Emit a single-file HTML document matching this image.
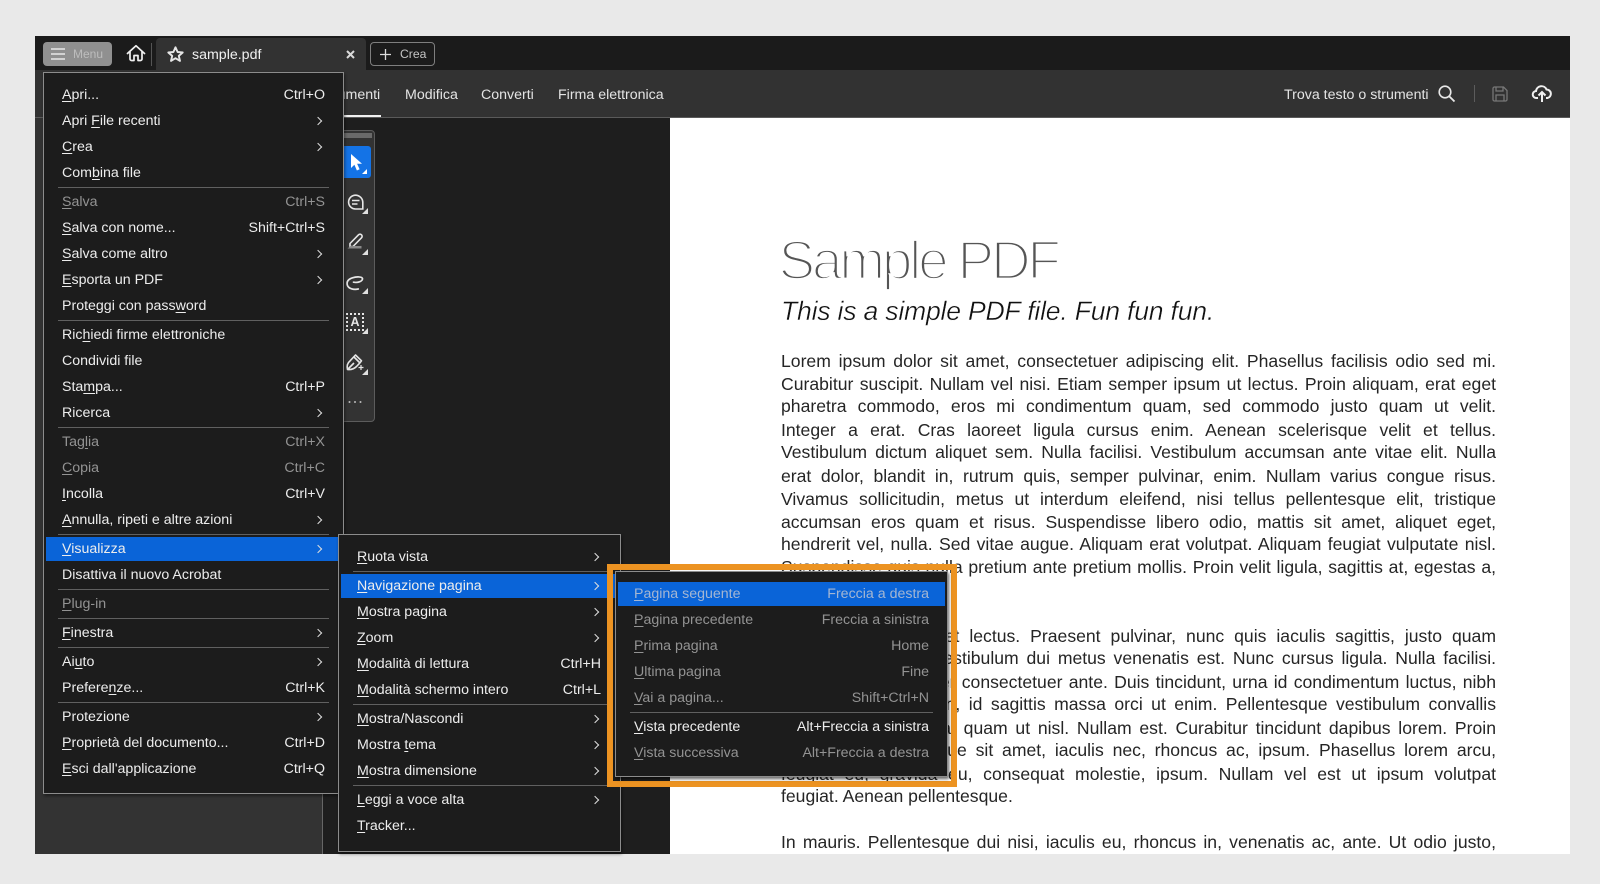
<!DOCTYPE html>
<html lang="it">
<head>
<meta charset="utf-8">
<title>sample.pdf</title>
<style>
html,body{margin:0;padding:0;width:1600px;height:884px;overflow:hidden;background:#e9e9e9;font-family:"Liberation Sans",Arial,sans-serif;}
div,span{box-sizing:border-box;}
.abs{position:absolute;}
#win{position:absolute;left:35px;top:36px;width:1535px;height:818px;background:#1e1e1e;overflow:hidden;}
#strip{position:absolute;left:35px;top:36px;width:1535px;height:34px;background:#1b1b1b;}
#bar{position:absolute;left:35px;top:70px;width:1535px;height:48px;background:#323232;border-bottom:1px solid #5a5a5a;}
#left{position:absolute;left:35px;top:118px;width:288px;height:736px;background:#333;border-right:1px solid #666;}
#doc{position:absolute;left:670px;top:118px;width:900px;height:736px;background:#fff;overflow:hidden;color:#222;}
.t{position:absolute;left:111px;width:715px;height:23px;line-height:23px;font-size:17.6px;text-align:justify;text-align-last:justify;overflow:hidden;color:#252525;}
.t.e{text-align-last:left;}
.nav{position:absolute;top:84px;height:22px;line-height:22px;font-size:14.2px;color:#e4e4e4;white-space:nowrap;}
.box{position:absolute;background:#1c1c1c;border:1px solid #8c8c8c;box-shadow:1px 2px 3px rgba(0,0,0,.45);}
.sep{position:absolute;height:1px;background:#606060;}
.hl{position:absolute;height:24px;background:#0a64d8;}
.r{position:absolute;height:26px;line-height:26px;font-size:14.2px;color:#ededed;display:flex;justify-content:space-between;white-space:nowrap;}
.m1{left:62px;width:263px;}
.m2{left:357px;width:244px;}
.m3{left:634px;width:295px;}
.d{color:#939393;}
.onblue{color:#a4b6d2;}
.c{position:relative;width:6px;height:6px;border-top:1.9px solid #dedede;border-right:1.9px solid #dedede;transform:rotate(45deg);margin:9.5px 4px 0 0;}
.m2 .c{margin-right:3px;}
u{text-decoration-thickness:1px;text-underline-offset:2px;}
svg{position:absolute;overflow:visible;}
.tri{position:absolute;width:0;height:0;border-left:6px solid transparent;border-bottom:6px solid #e0e0e0;}
</style>
</head>
<body>
<div id="win"></div>
<div id="strip"></div>
<div id="bar"></div>
<div id="left"></div>

<!-- menu button -->
<div class="abs" style="left:43px;top:42px;width:69px;height:24px;background:#909090;border-radius:4px;"></div>
<svg style="left:50px;top:47px" width="16" height="14"><path d="M1 2h14M1 7h14M1 12h14" stroke="#dcdcdc" stroke-width="1.7" fill="none"/></svg>
<div class="abs" style="left:73px;top:44px;line-height:20px;font-size:12px;color:#bdbdbd;">Menu</div>
<!-- home -->
<svg style="left:126px;top:44px" width="20" height="19"><path d="M1.5 9.5 10 1.8l8.5 7.7M4 7.500V15a1.500 1.500 0 0 0 1.500 1.500H8V11.500h4V16.500h2.500A1.500 1.500 0 0 0 16 15V7.500" stroke="#efefef" stroke-width="1.7" fill="none" stroke-linejoin="round" stroke-linecap="round"/></svg>
<div class="abs" style="left:151px;top:43px;width:1px;height:23px;background:#555;"></div>
<!-- tab -->
<div class="abs" style="left:156px;top:38px;width:210px;height:32px;background:#323232;border-radius:4px 4px 0 0;"></div>
<svg style="left:167px;top:46px" width="17" height="16"><path d="M8.500 1.300 10.600 6l5.100.5-3.900 3.400 1.200 5-4.500-2.700L4 14.900l1.200-5L1.300 6.500 6.400 6z" stroke="#e6e6e6" stroke-width="1.900" fill="none" stroke-linejoin="round"/></svg>
<div class="abs" style="left:192px;top:44px;line-height:22px;font-size:14.2px;color:#f0f0f0;">sample.pdf</div>
<svg style="left:346px;top:49.500px" width="9" height="9"><path d="M1 1l7 7M8 1 1 8" stroke="#dadada" stroke-width="2" fill="none"/></svg>
<!-- crea -->
<div class="abs" style="left:370px;top:42px;width:65px;height:24px;border:1px solid #7e7e7e;border-radius:4px;"></div>
<svg style="left:380px;top:49px" width="11" height="11"><path d="M5.500 0v11M0 5.500h11" stroke="#dcdcdc" stroke-width="1.300" fill="none"/></svg>
<div class="abs" style="left:400px;top:44px;line-height:20px;font-size:12.200px;color:#c4c4c4;">Crea</div>

<!-- nav -->
<div class="nav" style="left:319.500px;">Strumenti</div>
<div class="abs" style="left:300px;top:115px;width:81px;height:2px;background:#f2f2f2;"></div>
<div class="nav" style="left:405px;">Modifica</div>
<div class="nav" style="left:481px;">Converti</div>
<div class="nav" style="left:558px;">Firma elettronica</div>
<div class="nav" style="left:1284px;">Trova testo o strumenti</div>
<svg style="left:1438px;top:85px" width="18" height="18"><circle cx="7" cy="7" r="5.800" stroke="#e8e8e8" stroke-width="1.600" fill="none"/><path d="M11.200 11.200 16.500 16.500" stroke="#e8e8e8" stroke-width="1.800" fill="none"/></svg>
<div class="abs" style="left:1474px;top:85px;width:1px;height:17px;background:#5c5c5c;"></div>
<svg style="left:1492px;top:86px" width="16" height="16"><path d="M1 2.500A1.500 1.500 0 0 1 2.500 1h9L15 4.500v9a1.500 1.500 0 0 1-1.500 1.500h-11A1.500 1.500 0 0 1 1 13.500zM4 1v4h7V1M4 15V9h8v6" stroke="#777" stroke-width="1.300" fill="none"/></svg>
<svg style="left:1532px;top:84px" width="20" height="19"><path d="M6 14H4.500A3.500 3.500 0 0 1 4 7a5.500 5.500 0 0 1 10.500-1.500A4.300 4.300 0 0 1 15.500 14H14" stroke="#f0f0f0" stroke-width="2" fill="none"/><path d="M10 18V8M6.500 11.500 10 8l3.500 3.500" stroke="#f0f0f0" stroke-width="2" fill="none"/></svg>

<!-- document -->
<div id="doc">
<div class="abs" style="left:108.500px;top:107px;line-height:70px;font-size:55px;letter-spacing:-3.250px;color:#555;-webkit-text-stroke:2.700px #fff;paint-order:fill stroke;white-space:nowrap;">Sample PDF</div>
<div class="abs" style="left:111px;top:174px;line-height:38px;font-size:26.600px;letter-spacing:-0.215px;font-style:italic;color:#111;-webkit-text-stroke:0.400px #fff;paint-order:fill stroke;white-space:nowrap;">This is a simple PDF file. Fun fun fun.</div>

<div class="t" style="top:231.500px">Lorem ipsum dolor sit amet, consectetuer adipiscing elit. Phasellus facilisis odio sed mi.</div>
<div class="t" style="top:254.500px">Curabitur suscipit. Nullam vel nisi. Etiam semper ipsum ut lectus. Proin aliquam, erat eget</div>
<div class="t" style="top:277.400px">pharetra commodo, eros mi condimentum quam, sed commodo justo quam ut velit.</div>
<div class="t" style="top:300.700px">Integer a erat. Cras laoreet ligula cursus enim. Aenean scelerisque velit et tellus.</div>
<div class="t" style="top:323.300px">Vestibulum dictum aliquet sem. Nulla facilisi. Vestibulum accumsan ante vitae elit. Nulla</div>
<div class="t" style="top:346.700px">erat dolor, blandit in, rutrum quis, semper pulvinar, enim. Nullam varius congue risus.</div>
<div class="t" style="top:369.700px">Vivamus sollicitudin, metus ut interdum eleifend, nisi tellus pellentesque elit, tristique</div>
<div class="t" style="top:392.700px">accumsan eros quam et risus. Suspendisse libero odio, mattis sit amet, aliquet eget,</div>
<div class="t" style="top:414.700px">hendrerit vel, nulla. Sed vitae augue. Aliquam erat volutpat. Aliquam feugiat vulputate nisl.</div>
<div class="t" style="top:437.600px">Suspendisse quis nulla pretium ante pretium mollis. Proin velit ligula, sagittis at, egestas a,</div>
<div class="t e" style="top:460.500px">pulvinar quis, nisl.</div>

<div class="t" style="top:506.500px">Pellentesque sit amet lectus. Praesent pulvinar, nunc quis iaculis sagittis, justo quam</div>
<div class="t" style="top:529.300px">lobortis tortor, sed vestibulum dui metus venenatis est. Nunc cursus ligula. Nulla facilisi.</div>
<div class="t" style="top:552.600px">Phasellus ullamcorper consectetuer ante. Duis tincidunt, urna id condimentum luctus, nibh</div>
<div class="t" style="top:575.300px">ante vulputate sapien, id sagittis massa orci ut enim. Pellentesque vestibulum convallis</div>
<div class="t" style="top:598.600px">sem. Nulla consequat quam ut nisl. Nullam est. Curabitur tincidunt dapibus lorem. Proin</div>
<div class="t" style="top:621.300px">velit turpis, scelerisque sit amet, iaculis nec, rhoncus ac, ipsum. Phasellus lorem arcu,</div>
<div class="t" style="top:644.600px">feugiat eu, gravida eu, consequat molestie, ipsum. Nullam vel est ut ipsum volutpat</div>
<div class="t e" style="top:667px">feugiat. Aenean pellentesque.</div>

<div class="t" style="top:712.500px">In mauris. Pellentesque dui nisi, iaculis eu, rhoncus in, venenatis ac, ante. Ut odio justo,</div>
</div>

<!-- tool palette -->
<div class="abs" style="left:323px;top:130px;width:52px;height:292px;background:#333;border:1px solid #5c5c5c;border-radius:4px;"></div>
<div class="abs" style="left:326px;top:133px;width:46px;height:5px;background:#6a6a6a;"></div>
<div class="abs" style="left:326px;top:146px;width:45px;height:32px;background:#1473e6;border-radius:3px;"></div>
<svg style="left:351px;top:154px" width="11" height="17"><path d="M0 0v14l3.400-3.200 2.500 5.700 2.700-1.200-2.500-5.500H11z" fill="#fff"/></svg>
<div class="tri" style="left:362px;top:169px;border-left-width:5px;border-bottom-width:5px;border-bottom-color:#fff;"></div>
<svg style="left:347px;top:194px" width="18" height="17"><path d="M8.500 1.200a7.300 7.300 0 0 1 7.300 7.300v6.500H8.500a6.900 6.900 0 0 1 0-13.800z" stroke="#e6e6e6" stroke-width="1.600" fill="none"/><path d="M5 6.500h7.500M5 10h5.500" stroke="#e6e6e6" stroke-width="1.500"/></svg>
<div class="tri" style="left:362px;top:208px;"></div>
<svg style="left:347px;top:233px" width="18" height="16"><path d="M3 10.500 11.500 1.800a2.100 2.100 0 0 1 3 3L6 13.500H3z" stroke="#e6e6e6" stroke-width="1.600" fill="none" stroke-linejoin="round"/><path d="M.5 15.500l3-2.500h11v2.500z" fill="#8a8a8a"/></svg>
<div class="tri" style="left:362px;top:249px;"></div>
<svg style="left:346px;top:276px" width="18" height="15"><path d="M16.500 2.500C16 .5 10.500.5 6.500 1.800 2 3.300.5 6 1.300 9c1 3.800 6.500 5 11 4M16.500 2.500c.3 2.800-4.500 4.500-9 3.700" stroke="#e6e6e6" stroke-width="1.700" fill="none" stroke-linecap="round"/></svg>
<div class="tri" style="left:362px;top:288px;"></div>
<div class="abs" style="left:346px;top:313px;width:18px;height:18px;border:2px dotted #e6e6e6;"></div>
<div class="abs" style="left:346px;top:313px;width:18px;height:18px;line-height:18px;text-align:center;font-size:12.500px;font-weight:bold;color:#e6e6e6;">A</div>
<div class="tri" style="left:362px;top:328px;"></div>
<svg style="left:346px;top:354px" width="19" height="17"><path d="M1.500 15.500c-1-4 .2-6.800 2.700-8.800L9.500 1l6 5.800-1.500 2-3.500 3.700c-2.500 2.500-5.500 3.400-9 3zM1.500 15.500l6.500-6.500M8 3l5.500 5.500" stroke="#e6e6e6" stroke-width="1.600" fill="none" stroke-linejoin="round"/><path d="M12.500 13.500h5M15 11v5" stroke="#e6e6e6" stroke-width="1.200"/></svg>
<div class="tri" style="left:362px;top:369px;"></div>
<svg style="left:348px;top:400px" width="16" height="4"><circle cx="1.500" cy="2" r="1" fill="#bbb"/><circle cx="7" cy="2" r="1" fill="#bbb"/><circle cx="12.500" cy="2" r="1" fill="#bbb"/></svg>

<!-- main menu -->
<div class="box" style="left:43px;top:72px;width:301px;height:722px;"></div>
<div class="r m1" style="top:82px"><span><u>A</u>pri...</span><span>Ctrl+O</span></div>
<div class="r m1" style="top:108px"><span>Apri <u>F</u>ile recenti</span><span class="c"></span></div>
<div class="r m1" style="top:134px"><span><u>C</u>rea</span><span class="c"></span></div>
<div class="r m1" style="top:160px"><span>Com<u>b</u>ina file</span></div>
<div class="sep" style="left:58px;top:187px;width:271px;"></div>
<div class="r m1 d" style="top:189px"><span><u>S</u>alva</span><span>Ctrl+S</span></div>
<div class="r m1" style="top:215px"><span><u>S</u>alva con nome...</span><span>Shift+Ctrl+S</span></div>
<div class="r m1" style="top:241px"><span><u>S</u>alva come altro</span><span class="c"></span></div>
<div class="r m1" style="top:267px"><span><u>E</u>sporta un PDF</span><span class="c"></span></div>
<div class="r m1" style="top:293px"><span>Proteggi con pass<u>w</u>ord</span></div>
<div class="sep" style="left:58px;top:320px;width:271px;"></div>
<div class="r m1" style="top:322px"><span>Ric<u>h</u>iedi firme elettroniche</span></div>
<div class="r m1" style="top:348px"><span>Condividi file</span></div>
<div class="r m1" style="top:374px"><span>Sta<u>m</u>pa...</span><span>Ctrl+P</span></div>
<div class="r m1" style="top:400px"><span>Ricerca</span><span class="c"></span></div>
<div class="sep" style="left:58px;top:427px;width:271px;"></div>
<div class="r m1 d" style="top:429px"><span>Tag<u>l</u>ia</span><span>Ctrl+X</span></div>
<div class="r m1 d" style="top:455px"><span><u>C</u>opia</span><span>Ctrl+C</span></div>
<div class="r m1" style="top:481px"><span><u>I</u>ncolla</span><span>Ctrl+V</span></div>
<div class="r m1" style="top:507px"><span><u>A</u>nnulla, ripeti e altre azioni</span><span class="c"></span></div>
<div class="sep" style="left:58px;top:534px;width:271px;"></div>
<div class="hl" style="left:46px;top:537px;width:296px;"></div>
<div class="r m1" style="top:536px"><span><u>V</u>isualizza</span><span class="c"></span></div>
<div class="r m1" style="top:562px"><span>Disattiva il nuovo Acrobat</span></div>
<div class="sep" style="left:58px;top:589px;width:271px;"></div>
<div class="r m1 d" style="top:591px"><span><u>P</u>lug-in</span></div>
<div class="sep" style="left:58px;top:618px;width:271px;"></div>
<div class="r m1" style="top:620px"><span><u>F</u>inestra</span><span class="c"></span></div>
<div class="sep" style="left:58px;top:647px;width:271px;"></div>
<div class="r m1" style="top:649px"><span>Ai<u>u</u>to</span><span class="c"></span></div>
<div class="r m1" style="top:675px"><span>Prefere<u>n</u>ze...</span><span>Ctrl+K</span></div>
<div class="sep" style="left:58px;top:702px;width:271px;"></div>
<div class="r m1" style="top:704px"><span>Protezione</span><span class="c"></span></div>
<div class="r m1" style="top:730px"><span><u>P</u>roprietà del documento...</span><span>Ctrl+D</span></div>
<div class="r m1" style="top:756px"><span><u>E</u>sci dall'applicazione</span><span>Ctrl+Q</span></div>

<!-- submenu 1 -->
<div class="box" style="left:338px;top:534px;width:283px;height:318px;"></div>
<div class="r m2" style="top:544px"><span><u>R</u>uota vista</span><span class="c"></span></div>
<div class="sep" style="left:353px;top:571px;width:256px;"></div>
<div class="hl" style="left:341px;top:574px;width:277px;"></div>
<div class="r m2" style="top:573px"><span><u>N</u>avigazione pagina</span><span class="c"></span></div>
<div class="r m2" style="top:599px"><span><u>M</u>ostra pagina</span><span class="c"></span></div>
<div class="r m2" style="top:625px"><span><u>Z</u>oom</span><span class="c"></span></div>
<div class="r m2" style="top:651px"><span><u>M</u>odalità di lettura</span><span>Ctrl+H</span></div>
<div class="r m2" style="top:677px"><span><u>M</u>odalità schermo intero</span><span>Ctrl+L</span></div>
<div class="sep" style="left:353px;top:704px;width:256px;"></div>
<div class="r m2" style="top:706px"><span><u>M</u>ostra/Nascondi</span><span class="c"></span></div>
<div class="r m2" style="top:732px"><span>Mostra <u>t</u>ema</span><span class="c"></span></div>
<div class="r m2" style="top:758px"><span><u>M</u>ostra dimensione</span><span class="c"></span></div>
<div class="sep" style="left:353px;top:785px;width:256px;"></div>
<div class="r m2" style="top:787px"><span><u>L</u>eggi a voce alta</span><span class="c"></span></div>
<div class="r m2" style="top:813px"><span><u>T</u>racker...</span></div>

<!-- orange highlight -->
<div class="abs" style="left:607px;top:564px;width:350px;height:223px;border:6.500px solid #ec9322;"></div>

<!-- submenu 2 -->
<div class="box" style="left:615px;top:571px;width:333px;height:206px;box-shadow:1px 2px 3px rgba(0,0,0,.6);"></div>
<div class="hl" style="left:618px;top:582px;width:327px;"></div>
<div class="r m3 onblue" style="top:581px"><span><u>P</u>agina seguente</span><span>Freccia a destra</span></div>
<div class="r m3 d" style="top:607px"><span><u>P</u>agina precedente</span><span>Freccia a sinistra</span></div>
<div class="r m3 d" style="top:633px"><span><u>P</u>rima pagina</span><span>Home</span></div>
<div class="r m3 d" style="top:659px"><span><u>U</u>ltima pagina</span><span>Fine</span></div>
<div class="r m3 d" style="top:685px"><span><u>V</u>ai a pagina...</span><span>Shift+Ctrl+N</span></div>
<div class="sep" style="left:630px;top:712px;width:303px;"></div>
<div class="r m3" style="top:714px"><span><u>V</u>ista precedente</span><span>Alt+Freccia a sinistra</span></div>
<div class="r m3 d" style="top:740px"><span><u>V</u>ista successiva</span><span>Alt+Freccia a destra</span></div>
</body>
</html>
